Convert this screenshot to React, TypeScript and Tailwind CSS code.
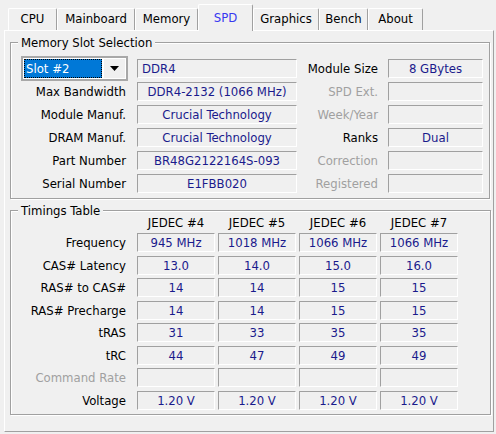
import React from "react";

const tabs = [
  { name: "CPU", w: "w-[49px]" },
  { name: "Mainboard", w: "w-[78px]" },
  { name: "Memory", w: "w-[63px]" },
  { name: "SPD", w: "w-[55px]", active: true },
  { name: "Graphics", w: "w-[66px]" },
  { name: "Bench", w: "w-[49px]" },
  { name: "About", w: "w-[55px]" },
];

const slotRows = [
  { label: "Max Bandwidth", value: "DDR4-2132 (1066 MHz)", right: "SPD Ext.", rightValue: "", dim: true },
  { label: "Module Manuf.", value: "Crucial Technology", right: "Week/Year", rightValue: "", dim: true },
  { label: "DRAM Manuf.", value: "Crucial Technology", right: "Ranks", rightValue: "Dual", dim: false },
  { label: "Part Number", value: "BR48G2122164S-093", right: "Correction", rightValue: "", dim: true },
  { label: "Serial Number", value: "E1FBB020", right: "Registered", rightValue: "", dim: true },
];

const timings = [
  { label: "Frequency", values: ["945 MHz", "1018 MHz", "1066 MHz", "1066 MHz"] },
  { label: "CAS# Latency", values: ["13.0", "14.0", "15.0", "16.0"] },
  { label: "RAS# to CAS#", values: ["14", "14", "15", "15"] },
  { label: "RAS# Precharge", values: ["14", "14", "15", "15"] },
  { label: "tRAS", values: ["31", "33", "35", "35"] },
  { label: "tRC", values: ["44", "47", "49", "49"] },
  { label: "Command Rate", values: ["", "", "", ""], dim: true },
  { label: "Voltage", values: ["1.20 V", "1.20 V", "1.20 V", "1.20 V"] },
];

// sunken static field, like a win32 read-only box
const Field = ({ children, className = "", left = false }: { children?: React.ReactNode; className?: string; left?: boolean }) => (
  <div
    className={`h-[19px] shrink-0 flex items-center border border-t-[#a0a0a0] border-l-[#a0a0a0] border-b-white border-r-white text-[#1a1a8c] whitespace-nowrap overflow-hidden ${
      left ? "justify-start pl-[4px]" : "justify-center"
    } ${className}`}
  >
    {children}
  </div>
);

const GroupBox = ({ title, children, className = "" }: { title: string; children: React.ReactNode; className?: string }) => (
  <fieldset className={`border border-[#a0a0a0] shadow-[inset_1px_1px_0_#fff,1px_1px_0_#fff] p-0 m-0 ${className}`}>
    <legend className="ml-[7px] px-[3px] bg-[#f0f0f0] leading-[15px]">{title}</legend>
    {children}
  </fieldset>
);

export default function App() {
  return (
    <div className="w-[496px] h-[434px] bg-[#f0f0f0] text-[13px] leading-[15px] text-black font-['DejaVu_Sans_Condensed','DejaVu_Sans',sans-serif] overflow-hidden select-none">
      {/* tab strip */}
      <div className="h-[30px] flex items-end pl-[8px]">
        {tabs.map((t) =>
          t.active ? (
            <div
              key={t.name}
              className={`${t.w} h-[27px] -mb-px relative z-10 bg-[#f0f0f0] flex justify-center pt-[5px] border-t border-l border-white border-r border-r-[#a0a0a0] rounded-t-[2px] text-[#3838f0]`}
            >
              {t.name}
            </div>
          ) : (
            <div
              key={t.name}
              className={`${t.w} h-[22px] flex justify-center pt-[2px] border-t border-l border-white border-r border-r-[#a0a0a0] rounded-t-[2px]`}
            >
              {t.name}
            </div>
          )
        )}
      </div>

      {/* panel */}
      <div className="ml-[4px] w-[490px] h-[402px] border border-t-white border-l-white border-r-[#a0a0a0] border-b-[#a0a0a0] px-[5px]">
        <GroupBox title="Memory Slot Selection" className="mt-[4px] w-[480px]">
          <div className="pt-[9px] pb-[5px] pl-[10px] flex flex-col gap-[4px]">
            <div className="h-[19px] flex items-center">
              <div className="w-[107px] h-[25px] -my-[3px] shrink-0 flex items-center gap-[2px] border-2 border-[#a8a8a8] bg-white p-[1px]">
                <div className="flex-1 h-full bg-[#0078d7] text-white outline-1 outline-dotted outline-black -outline-offset-1 flex items-center pl-[2px]">
                  Slot #2
                </div>
                <div className="w-[21px] h-full flex items-center justify-center bg-[#f0f0f0]">
                  <svg width="9" height="5" viewBox="0 0 9 5">
                    <path d="M0 0h9L4.5 5z" fill="#000" />
                  </svg>
                </div>
              </div>
              <Field left className="w-[160px] ml-[9px]">DDR4</Field>
              <div className="w-[81px] text-right">Module Size</div>
              <Field className="w-[95px] ml-[10px]">8 GBytes</Field>
            </div>
            {slotRows.map((r) => (
              <div key={r.label} className="h-[19px] flex items-center">
                <div className="w-[106px] shrink-0 text-right pr-[1px]">{r.label}</div>
                <Field className="w-[160px] ml-[10px]">{r.value}</Field>
                <div className={`w-[81px] text-right ${r.dim ? "text-[#a0a0a0]" : ""}`}>{r.right}</div>
                <Field className="w-[95px] ml-[10px]">{r.rightValue}</Field>
              </div>
            ))}
          </div>
        </GroupBox>

        <GroupBox title="Timings Table" className="mt-[4px] w-[481px]">
          <div className="pb-[4px] pl-[10px]">
            <div className="-mt-[3px] h-[15px] flex">
              <div className="w-[106px] shrink-0" />
              <div className="ml-[10px] flex gap-[3px]">
                {["JEDEC #4", "JEDEC #5", "JEDEC #6", "JEDEC #7"].map((h) => (
                  <div key={h} className="w-[78px] text-center">
                    {h}
                  </div>
                ))}
              </div>
            </div>
            <div className="mt-[3px] flex flex-col gap-[3.5px]">
              {timings.map((r) => (
                <div key={r.label} className="h-[19px] flex items-center">
                  <div className={`w-[106px] shrink-0 text-right pr-[1px] ${r.dim ? "text-[#a0a0a0]" : ""}`}>{r.label}</div>
                  <div className="ml-[10px] flex gap-[3px]">
                    {r.values.map((v, i) => (
                      <Field key={i} className="w-[78px]">
                        {v}
                      </Field>
                    ))}
                  </div>
                </div>
              ))}
            </div>
          </div>
        </GroupBox>
      </div>
    </div>
  );
}
